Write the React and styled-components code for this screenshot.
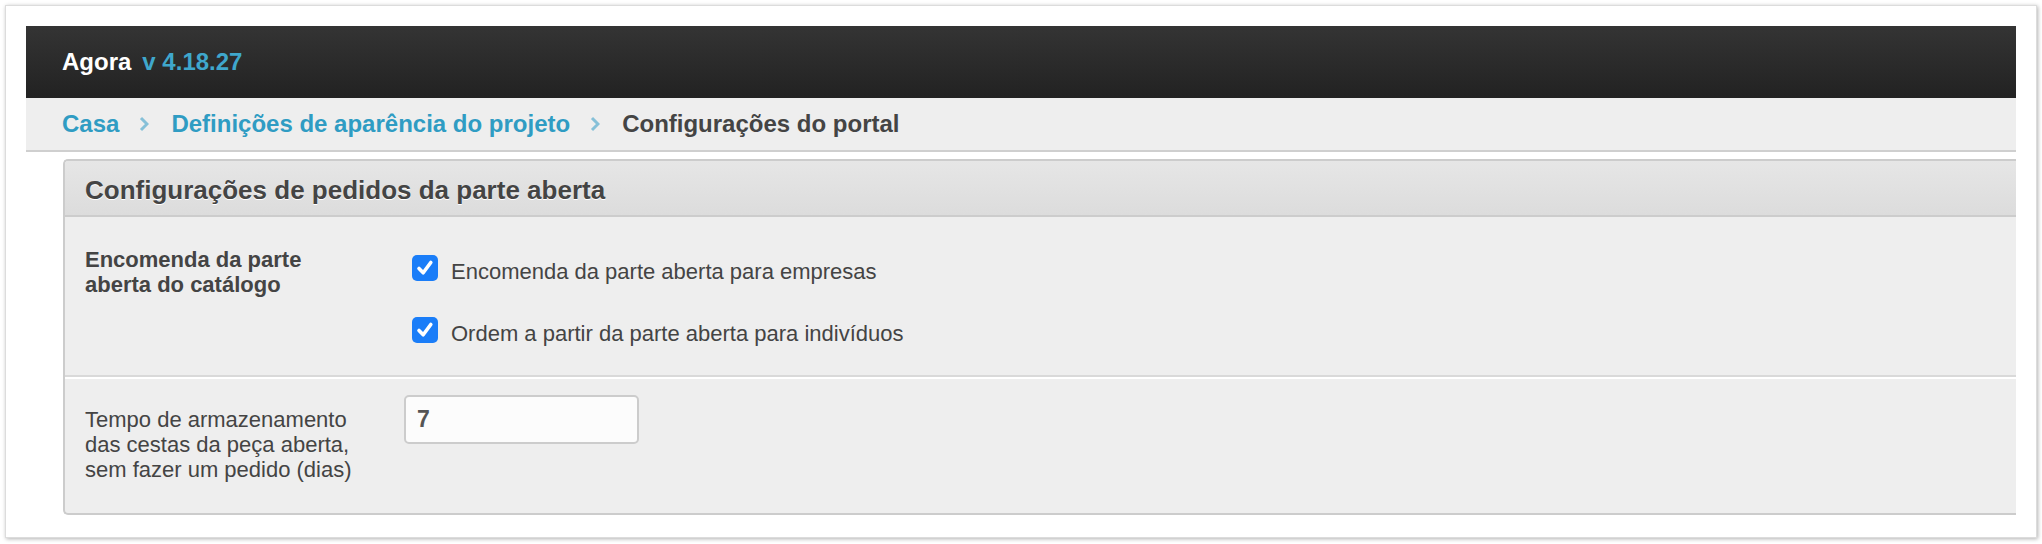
import { createGlobalStyle, styled } from 'styled-components'

const GlobalStyle = createGlobalStyle`
  html, body {
    margin: 0;
    padding: 0;
    background: #ffffff;
  }
  body {
    font-family: "Liberation Sans", Arial, Helvetica, sans-serif;
    color: #444444;
  }
`

const Page = styled.div`
  padding: 5px;
`

const Frame = styled.div`
  background: #ffffff;
  border: 1px solid #dcdcdc;
  box-shadow: 1px 1px 4px rgba(0, 0, 0, 0.3);
  padding: 20px 20px 22px 20px;
`

const TopBar = styled.div`
  display: flex;
  align-items: center;
  height: 72px;
  padding-left: 36px;
  background: linear-gradient(to bottom, #343434, #222222);
`

const Brand = styled.span`
  font-size: 24px;
  line-height: 28px;
  font-weight: bold;
  color: #ffffff;
`

const Version = styled.span`
  font-size: 24px;
  line-height: 28px;
  font-weight: bold;
  color: #3fa7cc;
  margin-left: 11px;
`

const Breadcrumb = styled.div`
  display: flex;
  align-items: center;
  height: 52px;
  padding-left: 36px;
  background: #eeeeee;
  border-bottom: 2px solid #cfcfcf;
`

const Crumb = styled.span`
  font-size: 24px;
  line-height: 28px;
  font-weight: bold;
  color: ${(p) => (p.$current ? '#444444' : '#2f9cc3')};
`

const Sep = styled.svg`
  width: 10px;
  height: 16px;
  margin: 0 22px 0 20px;
  flex-shrink: 0;
`

const Panel = styled.div`
  margin: 7px 0 0 37px;
  background: #eeeeee;
  border: 2px solid #cccccc;
  border-right: none;
  border-radius: 5px 0 0 5px;
  overflow: hidden;
`

const PanelHeader = styled.div`
  padding: 14px 20px 10px 20px;
  background: linear-gradient(to bottom, #e6e6e6, #dcdcdc);
  border-bottom: 2px solid #cccccc;
  font-size: 26px;
  line-height: 30px;
  font-weight: bold;
  color: #444444;
  text-shadow: 0 1px 0 #ffffff;
`

const Row = styled.div`
  display: grid;
  grid-template-columns: 319px 1fr;
  padding: ${(p) => p.$pad};
  border-top: ${(p) => (p.$first ? 'none' : '2px solid #ffffff')};
  border-bottom: ${(p) => (p.$last ? 'none' : '2px solid #d9d9d9')};
`

const Label = styled.div`
  font-size: 22px;
  line-height: 25px;
  font-weight: ${(p) => (p.$bold ? 'bold' : 'normal')};
  color: #444444;
  padding-top: ${(p) => p.$top || '0'};
`

const Fields = styled.div`
  display: flex;
  flex-direction: column;
  gap: 33px;
  padding-top: ${(p) => p.$top || '0'};
`

const Option = styled.label`
  display: flex;
  align-items: flex-start;
  margin-left: 8px;
`

const Box = styled.span`
  width: 26px;
  height: 26px;
  border-radius: 5px;
  background: #1a7df8;
  display: flex;
  align-items: center;
  justify-content: center;
  flex-shrink: 0;
`

const OptionText = styled.span`
  font-size: 22px;
  line-height: 25px;
  color: #444444;
  margin: 4px 0 0 13px;
`

const Input = styled.input`
  box-sizing: border-box;
  width: 235px;
  height: 49px;
  border: 2px solid #cccccc;
  border-radius: 5px;
  background: #fcfcfc;
  padding: 0 11px;
  font-family: "Liberation Sans", Arial, sans-serif;
  font-size: 23px;
  font-weight: bold;
  color: #555555;
  outline: none;
`

function Chevron() {
  return (
    <Sep viewBox="0 0 10 16">
      <polyline points="2,2 8,8 2,14" fill="none" stroke="#86c0d8" strokeWidth="3" />
    </Sep>
  )
}

function Checkbox({ children }) {
  return (
    <Option>
      <Box>
        <svg width="20" height="20" viewBox="0 0 20 20">
          <polyline points="4,10.5 8.2,14.8 15.8,4.5" fill="none" stroke="#ffffff" strokeWidth="3.6" strokeLinecap="round" strokeLinejoin="round" />
        </svg>
      </Box>
      <OptionText>{children}</OptionText>
    </Option>
  )
}

function App() {
  return (
    <>
      <GlobalStyle />
      <Page>
        <Frame>
          <TopBar>
            <Brand>Agora</Brand>
            <Version>v 4.18.27</Version>
          </TopBar>
          <Breadcrumb>
            <Crumb>Casa</Crumb>
            <Chevron />
            <Crumb>Definições de aparência do projeto</Crumb>
            <Chevron />
            <Crumb $current>Configurações do portal</Crumb>
          </Breadcrumb>
          <Panel>
            <PanelHeader>Configurações de pedidos da parte aberta</PanelHeader>
            <Row $first $pad="30px 20px 29px 20px">
              <Label $bold>
                Encomenda da parte
                <br />
                aberta do catálogo
              </Label>
              <Fields $top="8px">
                <Checkbox>Encomenda da parte aberta para empresas</Checkbox>
                <Checkbox>Ordem a partir da parte aberta para indivíduos</Checkbox>
              </Fields>
            </Row>
            <Row $last $pad="16px 20px 31px 20px">
              <Label $top="12px">
                Tempo de armazenamento
                <br />
                das cestas da peça aberta,
                <br />
                sem fazer um pedido (dias)
              </Label>
              <Fields>
                <Input defaultValue="7" readOnly />
              </Fields>
            </Row>
          </Panel>
        </Frame>
      </Page>
    </>
  )
}

export default App
